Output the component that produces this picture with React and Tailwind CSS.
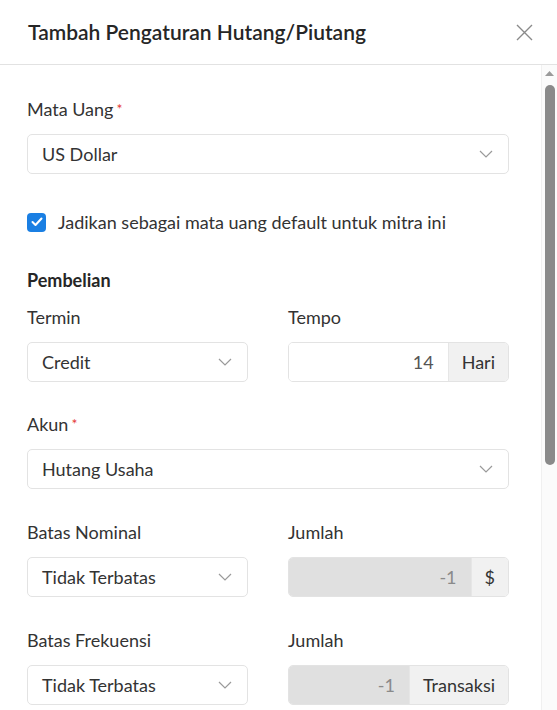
import React from "react";

function Chevron() {
  return (
    <svg width="14" height="8" viewBox="0 0 14 8" fill="none" className="shrink-0">
      <path d="M1 1l6 6 6-6" stroke="#9a9a9a" strokeWidth="1.2" />
    </svg>
  );
}

function Label({ children, required }) {
  return (
    <div className="mb-[13px] h-6 leading-6 text-[18px] text-[#333]">
      {children}
      {required && <span className="ml-[3px] align-top text-[14px] text-[#e53935]">*</span>}
    </div>
  );
}

function Select({ value }) {
  return (
    <div className="flex h-10 items-center justify-between rounded-[5px] border border-[#e3e3e3] bg-white pl-[14px] pr-[15px] text-[18px] text-[#333]">
      <span>{value}</span>
      <Chevron />
    </div>
  );
}

function AddonInput({ value, addon, disabled }) {
  return (
    <div className="flex h-10 overflow-hidden rounded-[5px] border border-[#e3e3e3] text-[18px]">
      <div
        className={
          disabled
            ? "flex flex-1 items-center justify-end bg-[#e0e0e0] pr-[14px] text-[#8a8a8a]"
            : "flex flex-1 items-center justify-end bg-white pr-[14px] text-[#555]"
        }
      >
        {value}
      </div>
      <div className="flex items-center border-l border-[#e6e6e6] bg-[#f1f1f1] px-[13px] text-[#333]">
        {addon}
      </div>
    </div>
  );
}

function Section({ title, akun }) {
  return (
    <>
      <div className="h-6 leading-6 text-[18px] font-bold text-[#262626]">{title}</div>
      <div className="mt-[13px] grid grid-cols-2 gap-x-10">
        <div>
          <Label>Termin</Label>
          <Select value="Credit" />
        </div>
        <div>
          <Label>Tempo</Label>
          <AddonInput value="14" addon="Hari" />
        </div>
      </div>
      <div className="mt-[30px]">
        <Label required>Akun</Label>
        <Select value={akun} />
      </div>
      <div className="mt-[31px] grid grid-cols-2 gap-x-10">
        <div>
          <Label>Batas Nominal</Label>
          <Select value="Tidak Terbatas" />
        </div>
        <div>
          <Label>Jumlah</Label>
          <AddonInput value="-1" addon="$" disabled />
        </div>
      </div>
      <div className="mt-[31px] grid grid-cols-2 gap-x-10">
        <div>
          <Label>Batas Frekuensi</Label>
          <Select value="Tidak Terbatas" />
        </div>
        <div>
          <Label>Jumlah</Label>
          <AddonInput value="-1" addon="Transaksi" disabled />
        </div>
      </div>
    </>
  );
}

export default function App() {
  return (
    <div className="flex h-[710px] w-[557px] flex-col overflow-hidden bg-white font-['Lato',sans-serif]">
      <div className="flex h-[65px] shrink-0 items-center justify-between border-b border-[#e2e2e2] pl-[28px] pr-[24px]">
        <h1 className="text-[21px] font-semibold text-[#262626]">Tambah Pengaturan Hutang/Piutang</h1>
        <svg width="17" height="17" viewBox="0 0 17 17" fill="none">
          <path d="M1 1l15 15M16 1L1 16" stroke="#8a8a8a" strokeWidth="1.4" />
        </svg>
      </div>
      <div className="flex min-h-0 flex-1">
        <div className="min-w-0 flex-1 overflow-hidden pl-[27px] pr-[32px] pt-[32px]">
          <Label required>Mata Uang</Label>
          <Select value="US Dollar" />

          <div className="mt-[36px] flex h-6 items-center gap-[12px]">
            <div className="flex h-[19px] w-[19px] items-center justify-center rounded-[4px] bg-[#1a7fe3]">
              <svg width="12" height="10" viewBox="0 0 12 10" fill="none">
                <path d="M1.5 5l3 3 6-6.5" stroke="white" strokeWidth="2" strokeLinecap="round" strokeLinejoin="round" />
              </svg>
            </div>
            <span className="text-[18px] text-[#333]">Jadikan sebagai mata uang default untuk mitra ini</span>
          </div>

          <div className="mt-[34px]">
            <Section title="Pembelian" akun="Hutang Usaha" />
          </div>
          <div className="mt-[40px]">
            <Section title="Penjualan" akun="Piutang Usaha" />
          </div>
        </div>
        <div className="flex w-[16px] shrink-0 flex-col items-center border-l border-[#f0f0f0] bg-[#fbfbfb] pt-[6px]">
          <svg width="9" height="5" viewBox="0 0 9 5">
            <path d="M0 5L4.5 0L9 5Z" fill="#9a9a9a" />
          </svg>
          <div className="mt-[9px] h-[380px] w-[10px] rounded-full bg-[#8a8a8a]" />
        </div>
      </div>
    </div>
  );
}
